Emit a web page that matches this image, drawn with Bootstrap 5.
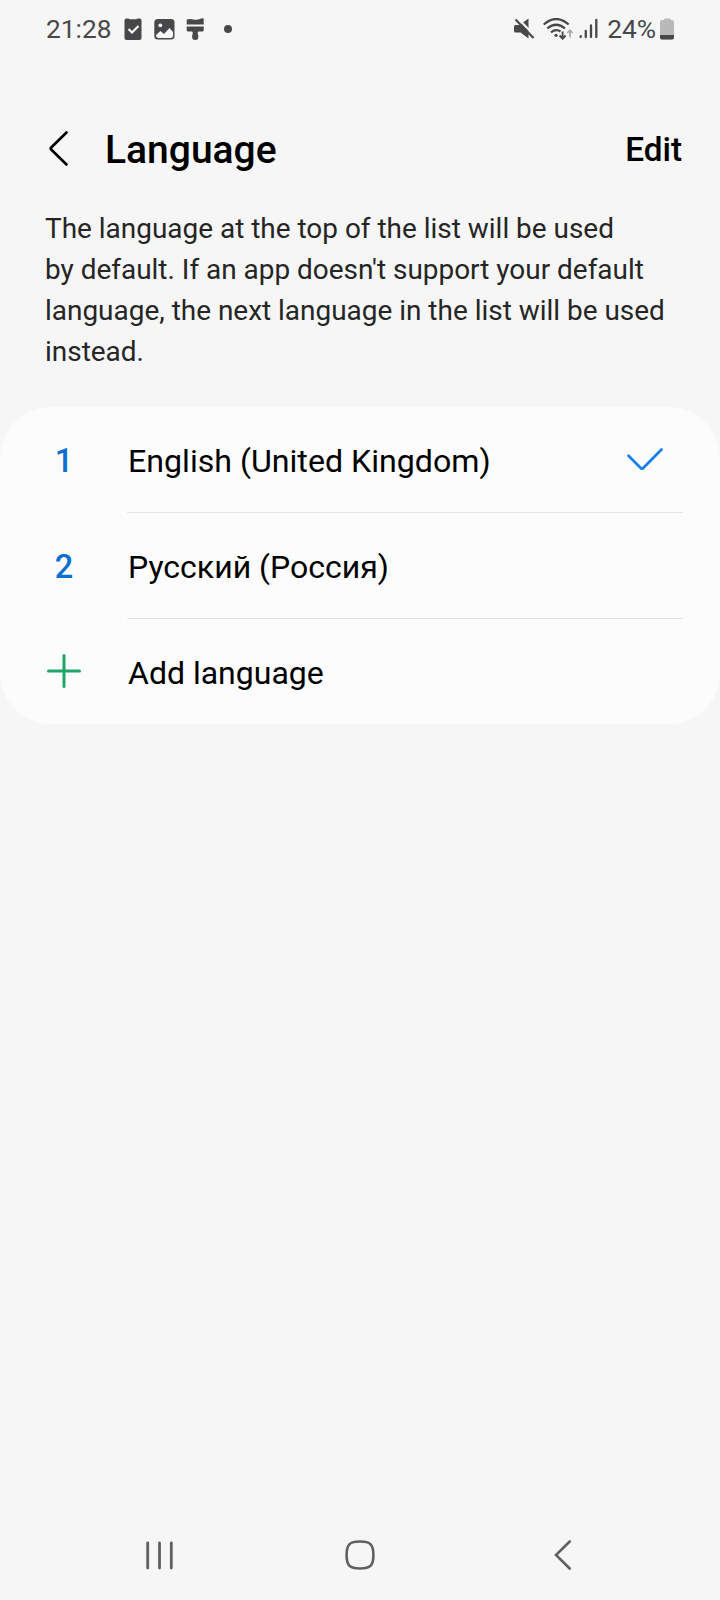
<!DOCTYPE html>
<html lang="en">
<head>
<meta charset="utf-8">
<meta name="viewport" content="width=device-width, initial-scale=1">
<title>Language</title>
<link href="https://cdn.jsdelivr.net/npm/bootstrap@5.3.0/dist/css/bootstrap.min.css" rel="stylesheet">
<style>
body{font-family:Roboto,"Noto Sans",sans-serif;background:#f6f6f6;color:#000;overflow:hidden}
svg{display:block;flex:none}
.screen{height:1600px}
.status{height:58px;padding:0 45px 0 46px;color:#48484a;font-size:26.3px;line-height:58px}
.clock{width:78px}
.pic-icon{margin-left:10px}
.brush-icon{margin-left:8px}
.dot-icon{margin-left:19px}
.wifi-icon{margin-left:8px}
.signal-icon{margin-left:5px}
.battery-text{margin-left:8px}
.heading{height:150px;padding:34px 37px 0 48px}
.back-icon{margin-top:37px}
.heading h1{font-size:39px;font-weight:500;margin:35px 0 0 35px;line-height:47px}
.edit-btn{font-size:33.3px;font-weight:500;line-height:40px;color:#000;margin:38px 1px 0 0}
.intro{font-size:27.95px;line-height:41px;color:#252525;padding:0 45px;height:199px}
.langs{background:#fcfcfc;border-radius:51px;height:317px;--bs-list-group-bg:transparent}
.langs .list-group-item{height:106px;padding:0 37px 0 47px;background:none;border:0;color:#000}
.langs .list-group-item:last-child{height:105px}
.slot{width:34px;margin-right:46px;font-size:32.500px;font-weight:500;color:#0c6fd0;line-height:108px}
.label-row{border-bottom:1px solid #e6e6e6;font-size:32px;line-height:108px;height:106px;padding-left:1px}
.list-group-item:first-child .label-row{font-size:32.150px}
.tick{margin:40px 19px 0 0}
.plus{margin-top:35px}
.list-group-item:last-child .label-row{border:0}
.soft-keys{height:90px;padding:0 148px 0 146px;color:#606060}
.home-key{margin-right:8px}
</style>
</head>
<body>
<div class="screen d-flex flex-column">
  <header class="status d-flex align-items-center">
    <span class="clock">21:28</span>
    <svg width="18" height="22" viewBox="124 18 18 22"><path fill="currentColor" d="M126.500 18.500h2l1 .7h7l1-.7h2q2 0 2 2v17.500q0 2-2 2h-13q-2 0-2-2v-17.500q0-2 2-2z"/><path d="M128.500 29l3.500 3.500 6.500-6.500" fill="none" stroke="#f6f6f6" stroke-width="2.200"/></svg>
    <svg class="pic-icon" width="23" height="22" viewBox="152 18 23 22"><rect x="154.300" y="19" width="20.200" height="20.500" rx="3.500" fill="currentColor"/><circle cx="160.300" cy="25.300" r="1.900" fill="#f6f6f6"/><path d="M156 35l4.500-4 3.500 3 5.500-6 3.500 4v3.500q0 2.500-2.500 2.500h-12q-2.500 0-2.500-3z" fill="#f6f6f6"/></svg>
    <svg class="brush-icon" width="22" height="22" viewBox="183 18 22 22" fill="currentColor"><path d="M186.700 19.500q3.500-1 7 0 4 .8 6-.5 2-1 4-.5v6h-17zM186.700 26.500h17v3.500q0 1.500-1.500 1.500h-3.500q-1 0-1 1v1.500q1 1 .5 3.500 0 2.500-3 2.500t-3-2.500q-.5-2.500.5-3.500v-1.500q0-1-1-1h-3.500q-1.500 0-1.500-1.500z"/></svg>
    <svg class="dot-icon" width="9" height="22" viewBox="224 18 9 22"><circle cx="228" cy="29" r="4" fill="currentColor"/></svg>
    <svg class="ms-auto" width="22" height="22" viewBox="513 18 22 22"><path d="M515.500 25h4l9-6.500v20l-8-6h-5q-1.500 0-1.500-1.500v-4.500q0-1.500 1.500-1.500z" fill="currentColor"/><path d="M517.500 18l18 18.500" stroke="#f6f6f6" stroke-width="2.200"/><path d="M515.500 19.500l18 18.500" stroke="currentColor" stroke-width="2.200"/></svg>
    <svg class="wifi-icon" width="31" height="22" viewBox="543 18 31 22" fill="none" stroke="currentColor" stroke-width="2.200"><path d="M543.700 24.500q12.500-11 25 0M547.300 28.500q8.900-7.500 17.700 0M551 32.300q5-4 9.500-.8"/><circle cx="556" cy="35.300" r="1.600" fill="currentColor" stroke="none"/><path d="M562.600 31.500v7.500M559.600 35.500l3 3.200 3-3.200" stroke-width="1.900"/><path d="M570 37.500v-7M567.300 33l2.700-2.700 2.700 2.700" stroke="#aaa" stroke-width="1.700"/></svg>
    <svg class="signal-icon" width="20" height="22" viewBox="579 18 20 22" stroke="currentColor" stroke-width="2.300" stroke-linecap="round"><path d="M580.700 36.200v.8M585.800 31v6M591 25.500v11.500M596.300 20v17"/></svg>
    <span class="battery-text">24%</span>
    <svg class="ms-1" width="15" height="22" viewBox="660 18 15 22"><path d="M664 20q0-1.500 1.500-1.500h4q1.500 0 1.500 1.500h1q2 0 2 2v15.500q0 2-2 2h-10q-2 0-2-2v-15.500q0-2 2-2z" fill="#b9b9b9"/><path d="M660 35h14v2.500q0 2-2 2h-10q-2 0-2-2z" fill="currentColor"/></svg>
  </header>

  <div class="heading d-flex align-items-start">
    <svg class="back-icon" width="22" height="38" viewBox="48 129 22 38"><path d="M66.500 132.500L51.200 147.500Q50.200 148.500 51.200 149.500L66.500 164.500" fill="none" stroke="#000" stroke-width="2.600" stroke-linecap="round" stroke-linejoin="round"/></svg>
    <h1>Language</h1>
    <a class="edit-btn ms-auto text-decoration-none" href="#">Edit</a>
  </div>

  <p class="intro mb-0">The language at the top of the list will be used<br>by default. If an app doesn't support your default<br>language, the next language in the list will be used<br>instead.</p>

  <ul class="langs list-group list-group-flush">
    <li class="list-group-item d-flex">
      <span class="slot text-center">1</span>
      <div class="label-row flex-grow-1 d-flex justify-content-between"><span>English (United Kingdom)</span>
        <svg class="tick" width="38" height="26" viewBox="626 447 38 26"><path d="M628.500 455.800L641 468.300Q642 469 643 468.300L661.500 449.500" fill="none" stroke="#1580ea" stroke-width="2.700" stroke-linecap="round" stroke-linejoin="round"/></svg>
      </div>
    </li>
    <li class="list-group-item d-flex"><span class="slot text-center">2</span><div class="label-row flex-grow-1">Русский (Россия)</div></li>
    <li class="list-group-item d-flex">
      <span class="slot"><svg class="plus" width="34" height="34" viewBox="0 0 34 34"><path d="M17 1.500v31M1.500 17h31" stroke="#20a568" stroke-width="3" stroke-linecap="round"/></svg></span>
      <div class="label-row flex-grow-1">Add language</div>
    </li>
  </ul>

  <nav class="soft-keys d-flex align-items-center justify-content-between mt-auto">
    <svg width="28" height="30" viewBox="146 1540 28 30" stroke="currentColor" stroke-width="2.800" stroke-linecap="round"><path d="M147.700 1543v25M159.500 1543v25M171.300 1543v25"/></svg>
    <svg class="home-key" width="30" height="30" viewBox="345.500 1540.500 30 30"><path d="M360.500 1542c10.500 0 13.400 3 13.400 13.500s-2.900 13.500-13.400 13.500-13.400-3-13.400-13.500 2.900-13.500 13.400-13.500z" fill="none" stroke="currentColor" stroke-width="2.600"/></svg>
    <svg width="18" height="30" viewBox="554 1540.500 18 30"><path d="M569.700 1542L556 1555.500L569.700 1569" fill="none" stroke="currentColor" stroke-width="2.600" stroke-linecap="round"/></svg>
  </nav>
</div>
<script src="https://cdn.jsdelivr.net/npm/bootstrap@5.3.0/dist/js/bootstrap.bundle.min.js"></script>
</body>
</html>
